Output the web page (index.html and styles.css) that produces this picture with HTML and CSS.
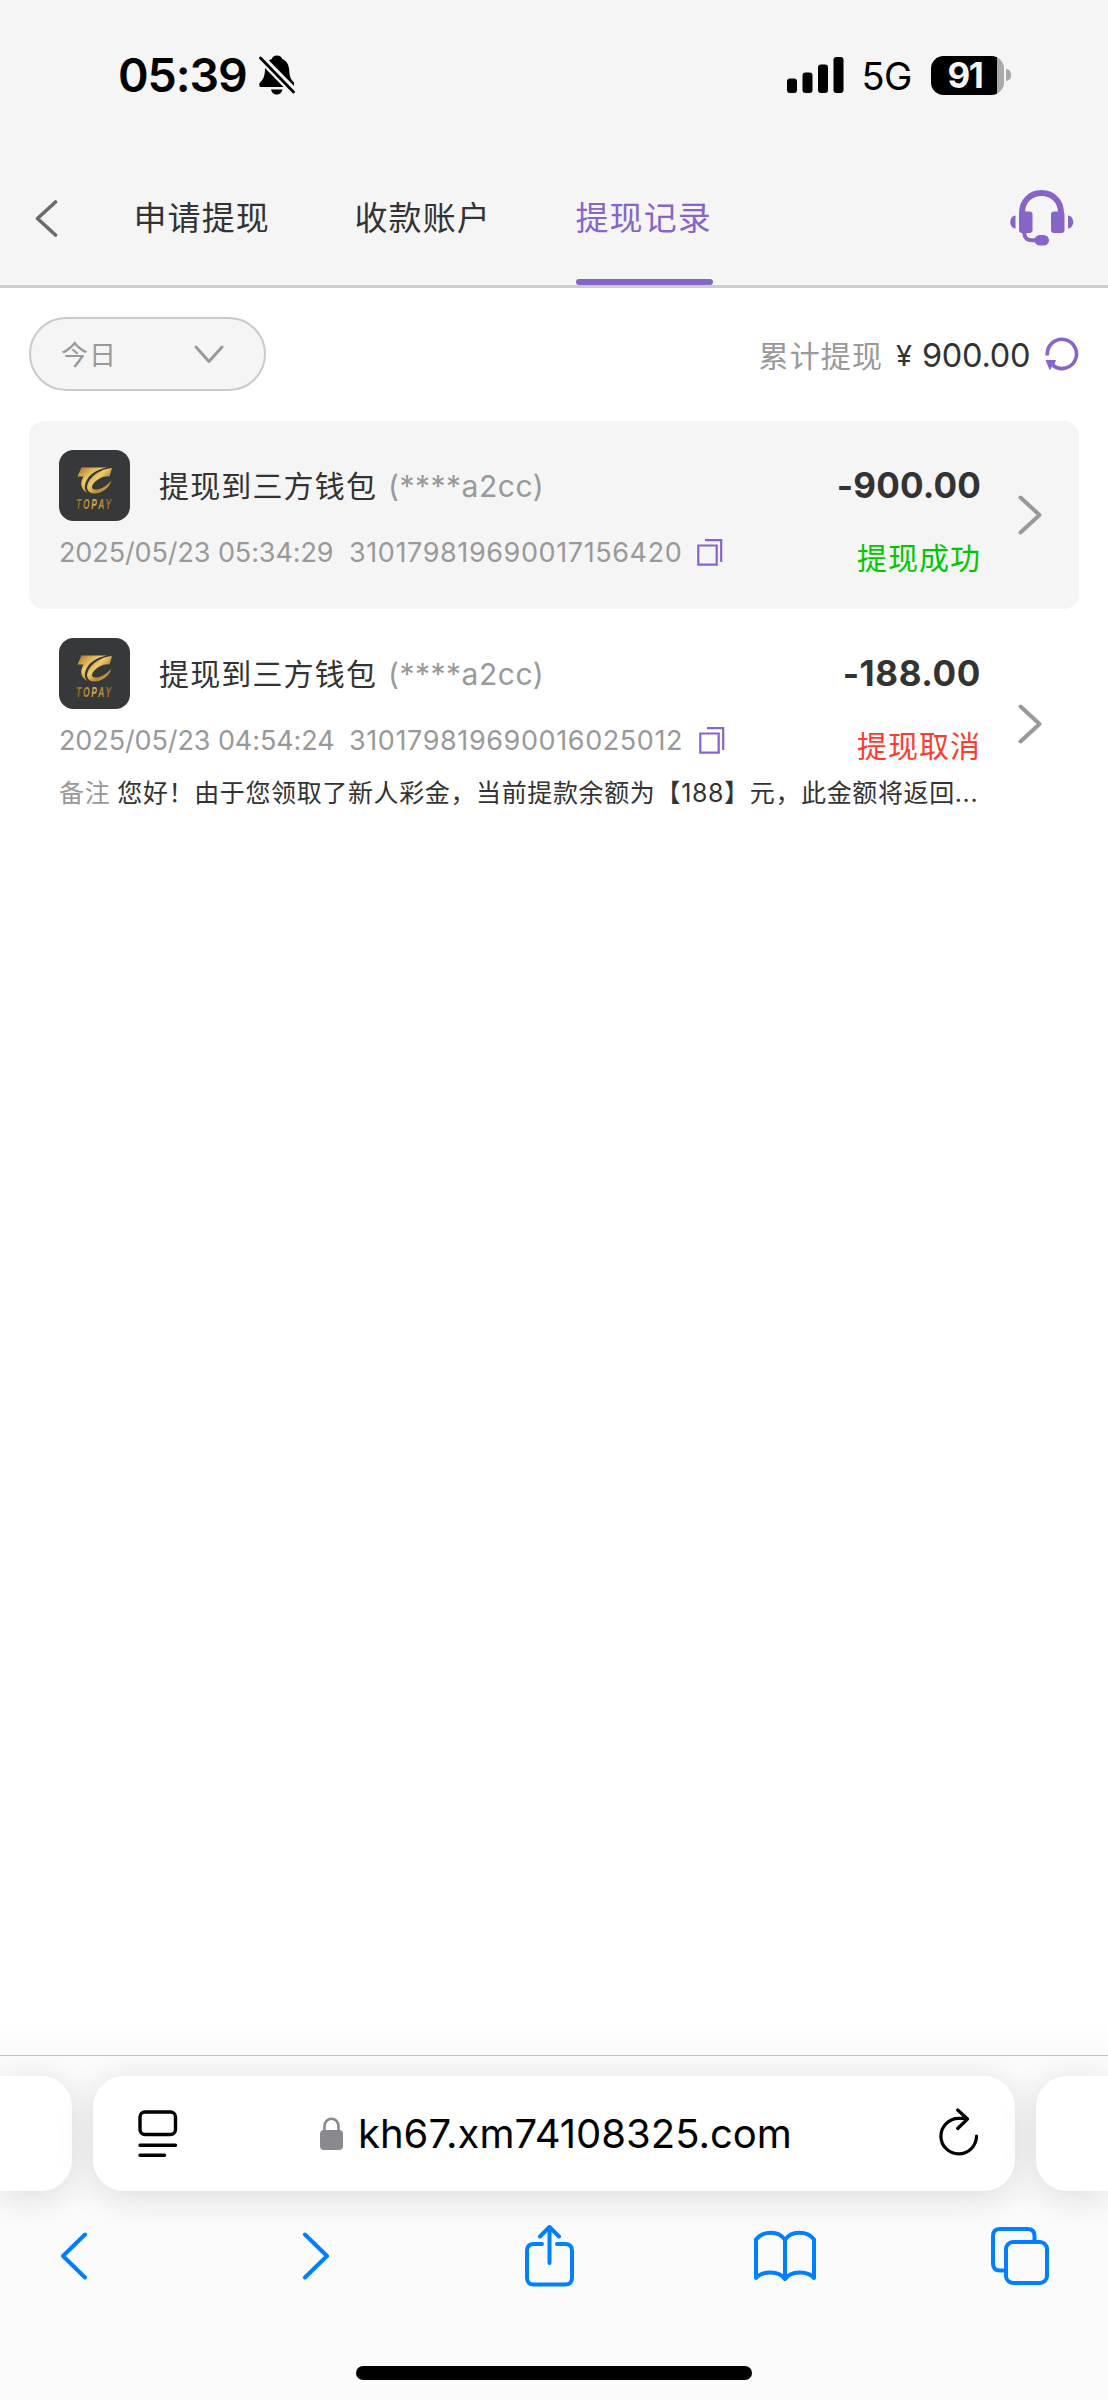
FILE: index.html
```html
<!DOCTYPE html>
<html lang="zh-CN">
<head>
<meta charset="utf-8">
<title>提现记录</title>
<link rel="stylesheet" href="styles.css">
</head>
<body>
<svg class="defs" width="0" height="0" aria-hidden="true">
  <defs>
    <linearGradient id="gold" x1="0" y1="0" x2="1" y2="1">
      <stop offset="0" stop-color="#a87428"/><stop offset=".4" stop-color="#f0cb6b"/><stop offset=".65" stop-color="#b88a35"/><stop offset="1" stop-color="#e0b458"/>
    </linearGradient>
    <linearGradient id="goldText" x1="0" y1="0" x2="1" y2="0">
      <stop offset="0" stop-color="#8f6527"/><stop offset=".5" stop-color="#d9ac55"/><stop offset="1" stop-color="#8f6527"/>
    </linearGradient>
    <symbol id="logo" viewBox="0 0 71 71">
      <rect width="71" height="71" rx="14.500" fill="#363839"/>
      <path fill="url(#gold)" d="M22.500 17.500H48C40 19 33 22.500 29 28C25 34 25 39.500 28.500 43C22 40 20.500 33 24.500 26.500H18.500Z"/>
      <path fill="url(#gold)" d="M53 18L50.500 26.500C45 25.500 38 29.500 34.500 33.500C31.500 37.500 33.500 40 37.500 39.500C43 39 48 35.500 52.500 30.500C50 38 43 43.500 35.500 43.500C27.500 43.500 26 36 31 29.500C36 23 44 19 53 18Z"/>
      <g transform="translate(17 58.700) scale(.56 1)"><text class="logo-text" textLength="64" lengthAdjust="spacing" fill="url(#goldText)">TOPAY</text></g>
    </symbol>
    <symbol id="copy" viewBox="0 0 26 27">
      <path d="M1.300 6.500H19.700V25.700H1.300ZM8 1.200H24.200V23" fill="none" stroke="#8765c8" stroke-width="2.200"/>
    </symbol>
    <symbol id="arrow" viewBox="0 0 24 40">
      <path d="M2.500 2.500L21.500 20L2.500 37.500" fill="none" stroke="#999" stroke-width="4" stroke-linecap="round" stroke-linejoin="round"/>
    </symbol>
  </defs>
</svg>

<header class="top">
  <div class="status">
    <span class="time">05:39</span>
    <svg class="bell" width="36" height="40" viewBox="0 0 36 40">
      <path d="M18 .500C20.800 .500 22.700 2 23.200 4C28 6 30 10 30.300 16C30.500 21 31.500 24 35 27.500V31L10 5.500C11.300 4.500 12.300 4.200 12.800 4C13.300 2 15.200 .500 18 .500ZM6 13L24.500 32H2.500C-.500 32 0 28.500 1.500 27C5 23.500 6 20 6 13ZM12 34.500H23.500C23 37.500 20.500 39.500 17.800 39.500S12.500 37.500 12 34.500Z"/>
      <path d="M1.500 3L34.500 37" fill="none" stroke="#000" stroke-width="2.800" stroke-linecap="round"/>
    </svg>
    <svg class="signal" width="57" height="36" viewBox="0 0 57 36">
      <rect x="0" y="21.500" width="10" height="14.500" rx="3"/><rect x="15.500" y="15.500" width="10" height="20.500" rx="3"/><rect x="31" y="7.500" width="10" height="28.500" rx="3"/><rect x="46.500" y="0" width="10" height="36" rx="3"/>
    </svg>
    <span class="net">5G</span>
    <div class="battery"><span class="level">91</span></div>
    <span class="nub"></span>
  </div>
  <nav class="nav">
    <svg class="back" width="23" height="37" viewBox="0 0 23 37"><path d="M20.500 2L2.500 18.500L20.500 35" fill="none" stroke="#6b6b6b" stroke-width="3.600" stroke-linecap="round" stroke-linejoin="round"/></svg>
    <div class="tabs">
      <a class="tab">申请提现</a><a class="tab">收款账户</a><a class="tab active">提现记录</a>
    </div>
    <svg class="service" width="64" height="56" viewBox="0 0 64 56" fill="#8765c8">
      <path d="M12 26V23C12 11 20.500 3 31.500 3S51 11 51 23V26" fill="none" stroke="#8765c8" stroke-width="6"/>
      <rect x="9" y="21.500" width="13.500" height="21.500" rx="3"/><rect x="41" y="21.500" width="13.500" height="21.500" rx="3"/>
      <path d="M5.500 25.500V38.500C-1.500 38-1.500 26 5.500 25.500ZM58 25.500V38.500C65 38 65 26 58 25.500Z"/>
      <path d="M14.200 41C14.200 48 17 50.300 22 50.300H28" fill="none" stroke="#8765c8" stroke-width="4"/>
      <rect x="24.500" y="45" width="14.500" height="10.500" rx="5.200"/>
    </svg>
  </nav>
</header>

<main class="content">
  <section class="toolbar">
    <div class="filter"><span>今日</span>
      <svg width="30" height="19" viewBox="0 0 30 19"><path d="M2 2L15 16.500L28 2" fill="none" stroke="#999" stroke-width="3" stroke-linecap="round" stroke-linejoin="round"/></svg>
    </div>
    <div class="total"><span class="total-label">累计提现</span><span class="yen">¥</span><span class="sum">900.00</span>
      <svg class="refresh" width="34" height="34" viewBox="0 0 34 34"><path d="M2.400 18.500A14.600 14.600 0 1 1 8 28.500" fill="none" stroke="#8765c8" stroke-width="3.600"/><path d="M.500 23H11L9.500 27L12 30L7.500 28.500L4.800 33.500Z" fill="#8765c8"/></svg>
    </div>
  </section>

  <article class="record shaded">
    <div class="main">
      <div class="head"><svg class="logo" width="71" height="71"><use href="#logo"/></svg><span class="title">提现到三方钱包</span><span class="account">(****a2cc)</span></div>
      <div class="meta"><span class="date">2025/05/23 05:34:29</span><span class="order">310179819690017156420</span><svg width="26" height="27"><use href="#copy"/></svg></div>
    </div>
    <div class="side"><span class="amount">-900.00</span><span class="state success">提现成功</span></div>
    <svg class="arrow" width="24" height="40"><use href="#arrow"/></svg>
  </article>

  <article class="record with-note">
    <div class="main">
      <div class="head"><svg class="logo" width="71" height="71"><use href="#logo"/></svg><span class="title">提现到三方钱包</span><span class="account">(****a2cc)</span></div>
      <div class="meta"><span class="date">2025/05/23 04:54:24</span><span class="order second">310179819690016025012</span><svg width="26" height="27"><use href="#copy"/></svg></div>
    </div>
    <div class="side"><span class="amount">-188.00</span><span class="state cancelled">提现取消</span></div>
    <svg class="arrow" width="24" height="40"><use href="#arrow"/></svg>
    <p class="note"><span class="note-label">备注</span>您好！由于您领取了新人彩金，当前提款余额为【188】元，此金额将返回...</p>
  </article>
</main>

<footer class="browser">
  <div class="bars">
    <div class="bar prev"></div>
    <div class="bar address">
      <svg class="reader" width="40" height="47" viewBox="0 0 40 47" fill="none" stroke="#000" stroke-width="3.400" stroke-linecap="round"><rect x="2" y="2" width="35.500" height="22.500" rx="5"/><path d="M2 35.300H37.500M2 45.300H26.500"/></svg>
      <svg class="lock" width="23" height="33" viewBox="0 0 23 33"><rect y="13" width="23" height="20" rx="4" fill="#8a898f"/><path d="M4.500 15V9.500C4.500-.800 18.500-.800 18.500 9.500V15" fill="none" stroke="#8a898f" stroke-width="2.600"/></svg>
      <span class="url">kh67.xm74108325.com</span>
      <svg class="reload" width="40" height="48" viewBox="0 0 40 48" fill="none" stroke="#000" stroke-width="3.200" stroke-linecap="round" stroke-linejoin="round"><path d="M37.500 28A17.800 17.800 0 1 1 19.700 10.300H28M18.700 2L28.500 11L18.700 20.500"/></svg>
    </div>
    <div class="bar next"></div>
  </div>
  <div class="actions">
    <svg width="28" height="48" viewBox="0 0 28 48"><path d="M25 2.500L3 24L25 45.500"/></svg>
    <svg width="28" height="48" viewBox="0 0 28 48"><path d="M3 2.500L25 24L3 45.500"/></svg>
    <svg width="49" height="62" viewBox="0 0 49 62"><path d="M17 19H8.500C4.500 19 2 21.500 2 25.500V53C2 57 4.500 59.500 8.500 59.500H40.500C44.500 59.500 47 57 47 53V25.500C47 21.500 44.500 19 40.500 19H32M24.500 38V3M15 11.500L24.500 2L34 11.500"/></svg>
    <svg width="62" height="52" viewBox="0 0 62 52"><path d="M31 10C25 .500 9 .500 2 9.500V48C8.500 40.500 25 40.500 31 49C37 40.500 53.500 40.500 60 48V9.500C53 .500 37 .500 31 10ZM31 10V49"/></svg>
    <svg width="58" height="58" viewBox="0 0 58 58"><path d="M14 43.500H9C4.500 43.500 2 41 2 36.500V9C2 4.500 4.500 2 9 2H36.500C41 2 43.500 4.500 43.500 9V14"/><rect x="15" y="15" width="41" height="41" rx="7"/></svg>
  </div>
  <div class="home"></div>
</footer>
</body>
</html>
```
FILE: styles.css
```css
* { box-sizing: border-box; }

body {
  margin: 0;
  width: 1108px;
  height: 2400px;
  display: flex;
  flex-direction: column;
  background: #fff;
  color: #333;
  font-family: Inter, "Noto Sans CJK SC", sans-serif;
  overflow: hidden;
}

svg { display: block; flex: none; }
span, a { white-space: nowrap; }
.defs { position: absolute; }
.logo-text { font: italic 700 15px "Liberation Sans", sans-serif; }

/* status bar and tabs */
.top {
  height: 288px;
  flex: none;
  background: #f5f5f5;
  border-bottom: 3px solid #cdcdcd;
}
.status {
  height: 150px;
  padding-left: 118px;
  display: flex;
  align-items: center;
  color: #000;
}
.time { width: 141px; font-size: 46.500px; font-weight: 600; letter-spacing: -1.100px; }
.bell { margin-right: 491.500px; }
.signal { margin-right: 18px; }
.net { width: 69px; font-size: 38px; font-weight: 400; margin-top: 2px; letter-spacing: -.5px; }
.battery {
  width: 73px;
  height: 39px;
  border-radius: 12.500px;
  background: linear-gradient(90deg, #000 66px, #aaa 66px);
  display: flex;
  padding-left: 17px;
  align-items: center;
}
.level { color: #f5f5f5; font-size: 35px; font-weight: 700; line-height: 39px; letter-spacing: -1.500px; }
.nub { width: 5px; height: 12px; margin-left: 2.500px; background: #aaa; border-radius: 0 5px 5px 0; }

.nav { height: 135px; display: flex; align-items: center; padding: 0 34.500px 0 35px; }
.back { margin: 1px 75.500px 0 0; }
.tabs { display: flex; gap: 84px; align-self: stretch; }
.tab {
  display: block;
  width: 137px;
  font-size: 33px;
  letter-spacing: 1.100px;
  line-height: 137px;
}
.tab.active {
  color: #8765c8;
  display: flex;
  flex-direction: column;
  height: 135px;
}
.tab.active::after {
  content: "";
  flex: none;
  height: 6px;
  margin-top: -8px;
  border-radius: 3px;
  background: #8765c8;
}
.service { margin-left: auto; }

/* filter row */
.content { flex: 1; padding: 29px 29px 0; background: linear-gradient(transparent 98%, #fbfbfb); }
.toolbar { height: 104px; display: flex; align-items: flex-start; justify-content: space-between; }
.filter {
  width: 237px;
  height: 74px;
  border: 2.500px solid #cacaca;
  border-radius: 37px;
  background: #f5f5f5;
  display: flex;
  align-items: center;
  justify-content: space-between;
  padding: 0 40px 0 30px;
  font-size: 27px;
  letter-spacing: 1px;
  color: #999;
}
.filter span { margin-top: -2px; }
.total { display: flex; align-items: center; height: 74px; font-size: 30px; }
.total-label { color: #999; letter-spacing: 1.100px; margin-right: 13px; }
.yen { font-size: 29px; width: 26px; padding-top: 3px; }
.sum { font-size: 32.500px; width: 107px; letter-spacing: -.3px; padding-top: 2px; }
.refresh { margin-left: 16px; }

/* records */
.record {
  height: 188px;
  padding: 29px 37px 0 30px;
  border-radius: 15px;
  display: grid;
  grid-template-columns: 680px 242px auto;
  align-content: start;
}
.shaded { background: #f5f5f5; }
.head { height: 71px; display: flex; align-items: center; font-size: 30px; letter-spacing: 1.150px; }
.title { margin-left: 29px; margin-top: -3px; }
.account { color: #999; margin-left: 11px; letter-spacing: .5px; }
.meta { height: 62px; display: flex; align-items: center; color: #999; font-size: 27px; }
.date { width: 290px; letter-spacing: -.1px; }
.order { width: 348px; letter-spacing: .6px; }
.order.second { width: 350px; }
.side { display: flex; flex-direction: column; align-items: flex-end; }
.amount { font-size: 35px; font-weight: 700; line-height: 71px; letter-spacing: .15px; }
.with-note .amount { letter-spacing: .6px; }
.state { font-size: 30px; letter-spacing: 1px; line-height: 75px; }
.success { color: #00c800; }
.cancelled { color: #ff3b30; }
.arrow { justify-self: end; margin-top: 45px; }
.with-note { height: 215px; }
.with-note .arrow { margin-top: 66px; }
.note { grid-column: 1 / 3; margin: -16px 0 0; height: 50px; line-height: 50px; font-size: 25px; letter-spacing: .63px; white-space: nowrap; }
.note-label { color: #999; margin-right: 7px; }

/* browser chrome */
.browser { height: 345px; flex: none; border-top: 1px solid #c4c4c4; background: #fbfbfb; display: flex; flex-direction: column; align-items: center; }
.bars { width: 1108px; display: grid; grid-template-columns: 72px 922px 72px; gap: 21px; padding-top: 20px; clip-path: inset(0 0 -80px); }
.bar { height: 115px; background: #fff; border-radius: 31px; box-shadow: 0 6px 36px rgba(0, 0, 0, .13); }
.prev { border-radius: 0 31px 31px 0; }
.next { border-radius: 31px 0 0 31px; }
.address { display: flex; align-items: center; padding: 0 36.500px 0 45px; color: #000; }
.lock { margin-left: 142px; }
.url { font-size: 40px; margin-left: 15px; }
.reload { margin: -3px 0 0 auto; }
.actions { width: 1108px; height: 126px; padding: 3px 0 0 60px; display: grid; grid-template-columns: 242px 222.500px 229px 237px 58px; align-items: center; }
.actions path, .actions rect { fill: none; stroke: #0080ff; stroke-width: 4px; stroke-linecap: round; stroke-linejoin: round; }
.home { width: 396px; height: 14px; border-radius: 7px; background: #000; margin-top: 49px; }
```
